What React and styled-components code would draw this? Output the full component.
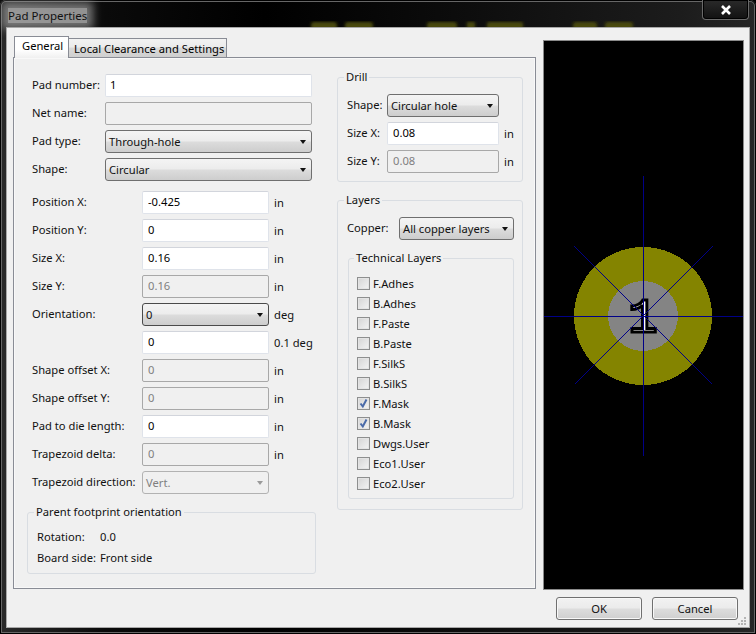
import React from "react";
import styled, { createGlobalStyle, css } from "styled-components";

const padRows = [
  { label: "Pad number:", value: "1" },
  { label: "Net name:", value: "", disabled: true },
  { label: "Pad type:", select: "Through-hole" },
  { label: "Shape:", select: "Circular" },
];

const geometryRows = [
  { label: "Position X:", value: "-0.425", unit: "in" },
  { label: "Position Y:", value: "0", unit: "in" },
  { label: "Size X:", value: "0.16", unit: "in" },
  { label: "Size Y:", value: "0.16", unit: "in", disabled: true },
  { label: "Orientation:", select: "0", unit: "deg", focused: true },
  { label: "", value: "0", unit: "0.1 deg" },
  { label: "Shape offset X:", value: "0", unit: "in", disabled: true },
  { label: "Shape offset Y:", value: "0", unit: "in", disabled: true },
  { label: "Pad to die length:", value: "0", unit: "in" },
  { label: "Trapezoid delta:", value: "0", unit: "in", disabled: true },
  { label: "Trapezoid direction:", select: "Vert.", disabled: true },
];

const layers = [
  { name: "F.Adhes" },
  { name: "B.Adhes" },
  { name: "F.Paste" },
  { name: "B.Paste" },
  { name: "F.SilkS" },
  { name: "B.SilkS" },
  { name: "F.Mask", checked: true },
  { name: "B.Mask", checked: true },
  { name: "Dwgs.User" },
  { name: "Eco1.User" },
  { name: "Eco2.User" },
];

function Select({ value, disabled, focused }) {
  return (
    <Combo $disabled={disabled} $focused={focused}>
      <span>{value}</span>
      <Arrow $disabled={disabled} />
    </Combo>
  );
}

function Control({ row }) {
  if (row.select) {
    return <Select value={row.select} disabled={row.disabled} focused={row.focused} />;
  }
  return <TextInput readOnly value={row.value} disabled={row.disabled} />;
}

// the window behind the dialog shows through the glass title bar
function TitleGlass() {
  return (
    <GlassArt width="742" height="28" viewBox="0 0 742 28">
      <defs>
        <filter id="glass-blur">
          <feGaussianBlur stdDeviation="1.6" />
        </filter>
      </defs>
      <g fill="#4a480a" filter="url(#glass-blur)">
        <rect x="304" y="22" width="26" height="8" rx="3" />
        <rect x="338" y="22" width="28" height="8" rx="3" />
        <rect x="420" y="22" width="30" height="8" rx="3" />
        <rect x="460" y="22" width="8" height="8" />
        <rect x="480" y="22" width="36" height="8" rx="2" />
        <rect x="566" y="22" width="24" height="8" rx="3" />
        <rect x="598" y="22" width="28" height="8" rx="3" />
      </g>
    </GlassArt>
  );
}

function PadPreview() {
  return (
    <svg width="199" height="548" viewBox="0 0 199 548">
      <g shapeRendering="crispEdges">
        <circle cx="99" cy="275" r="69" fill="#848400" />
        <circle cx="99" cy="275" r="35" fill="#848484" />
      </g>
      <text
        x="99"
        y="291"
        textAnchor="middle"
        fontFamily="'Liberation Mono', monospace"
        fontSize="49"
        fill="#fff"
        stroke="#000"
        strokeWidth="3"
      >
        1
      </text>
      <g stroke="#000088" strokeWidth="1" shapeRendering="crispEdges">
        <line x1="99" y1="135" x2="99" y2="415" />
        <line x1="0" y1="275" x2="199" y2="275" />
        <line x1="30" y1="205" x2="168" y2="343" />
        <line x1="169" y1="205" x2="31" y2="343" />
      </g>
    </svg>
  );
}

export default function App() {
  return (
    <>
      <GlobalStyle />
      <Window>
        <TitleBar>
          <TitleGlass />
          <Title>Pad Properties</Title>
          <CloseButton>
            <svg width="10" height="10" viewBox="0 0 10 10">
              <path d="M1 1 L9 9 M9 1 L1 9" stroke="#fff" strokeWidth="2.6" />
            </svg>
          </CloseButton>
        </TitleBar>
        <Client>
          <Main>
            <Notebook>
              <TabStrip>
                <Tab $active>General</Tab>
                <Tab>Local Clearance and Settings</Tab>
              </TabStrip>
              <Panel>
                <LeftColumn>
                  <PadForm>
                    {padRows.map((row) => (
                      <React.Fragment key={row.label}>
                        <Label>{row.label}</Label>
                        <Control row={row} />
                      </React.Fragment>
                    ))}
                  </PadForm>
                  <GeometryForm>
                    {geometryRows.map((row, index) => (
                      <React.Fragment key={index}>
                        <Label>{row.label}</Label>
                        <Control row={row} />
                        <Unit>{row.unit}</Unit>
                      </React.Fragment>
                    ))}
                  </GeometryForm>
                  <ParentBox>
                    <Legend>Parent footprint orientation</Legend>
                    <ParentGrid>
                      <Label>Rotation:</Label>
                      <Label>0.0</Label>
                      <Label>Board side:</Label>
                      <Label>Front side</Label>
                    </ParentGrid>
                  </ParentBox>
                </LeftColumn>
                <RightColumn>
                  <DrillBox>
                    <Legend>Drill</Legend>
                    <DrillForm>
                      <Label>Shape:</Label>
                      <Select value="Circular hole" />
                      <Unit />
                      <Label>Size X:</Label>
                      <TextInput readOnly value="0.08" />
                      <Unit>in</Unit>
                      <Label>Size Y:</Label>
                      <TextInput readOnly disabled value="0.08" />
                      <Unit>in</Unit>
                    </DrillForm>
                  </DrillBox>
                  <LayersBox>
                    <Legend>Layers</Legend>
                    <CopperRow>
                      <Label>Copper:</Label>
                      <Select value="All copper layers" />
                    </CopperRow>
                    <TechnicalBox>
                      <Legend>Technical Layers</Legend>
                      {layers.map((layer) => (
                        <CheckRow key={layer.name}>
                          <CheckBox>
                            {layer.checked && (
                              <svg width="11" height="11" viewBox="0 0 11 11">
                                <path d="M2.5 5.5 L4.8 8.5 L8.5 1.5" fill="none" stroke="#4a6aa8" strokeWidth="2" />
                              </svg>
                            )}
                          </CheckBox>
                          {layer.name}
                        </CheckRow>
                      ))}
                    </TechnicalBox>
                  </LayersBox>
                </RightColumn>
              </Panel>
            </Notebook>
            <Preview>
              <PadPreview />
            </Preview>
          </Main>
          <Footer>
            <PushButton>OK</PushButton>
            <PushButton>Cancel</PushButton>
          </Footer>
          <SizeGrip>
            <svg width="9" height="9" viewBox="0 0 9 9" fill="#b5b5b5">
              <rect x="6" y="0" width="2" height="2" />
              <rect x="3" y="3" width="2" height="2" />
              <rect x="6" y="3" width="2" height="2" />
              <rect x="0" y="6" width="2" height="2" />
              <rect x="3" y="6" width="2" height="2" />
              <rect x="6" y="6" width="2" height="2" />
            </svg>
          </SizeGrip>
        </Client>
      </Window>
    </>
  );
}

const GlobalStyle = createGlobalStyle`
  * {
    box-sizing: border-box;
  }
  html,
  body {
    margin: 0;
    background: #000;
  }
  body {
    font-family: "Noto Sans", "Open Sans", sans-serif;
    font-size: 11.2px;
    color: #000;
  }
`;

const Window = styled.div`
  display: flex;
  flex-direction: column;
  width: 756px;
  height: 634px;
  padding: 0 7px 7px;
  background: linear-gradient(90deg, #2a2a2a, #0a0a0a 14%, #000 35%, #0c0c0c 60%, #1c1c1c 90%, #262626);
  border-radius: 6px 6px 0 0;
  box-shadow: inset 0 0 0 1px #000, inset 0 0 0 2px #666;
  position: relative;
`;

const TitleBar = styled.div`
  display: flex;
  align-items: center;
  height: 28px;
  flex: none;
  position: relative;
`;

const GlassArt = styled.svg`
  position: absolute;
  left: 0;
  top: 0;
`;

const Title = styled.div`
  position: relative;
  margin: 3px 0 0 1px;
  font-size: 11.5px;
  line-height: 15px;
  color: #111;
  background: rgba(190, 190, 190, 0.75);
  box-shadow: 0 0 9px 6px rgba(180, 180, 180, 0.6);
`;

const CloseButton = styled.div`
  position: absolute;
  top: 0;
  right: 0;
  display: flex;
  align-items: center;
  justify-content: center;
  width: 47px;
  height: 20px;
  border: 1px solid #6a6a6a;
  border-top: none;
  border-radius: 0 0 4px 4px;
  box-shadow: inset 0 0 0 1px #000;
  background: linear-gradient(#2a2a2a, #111);
`;

const Client = styled.div`
  position: relative;
  flex: 1;
  min-height: 0;
  padding: 8px 5px 0 6px;
  background: #f0f0f0;
  box-shadow: 0 0 0 1px #a8a8a8;
`;

const Main = styled.div`
  display: flex;
  gap: 7px;
  height: 554px;
`;

const Notebook = styled.div`
  display: flex;
  flex-direction: column;
  width: 523px;
  height: 553px;
`;

const TabStrip = styled.div`
  display: flex;
  align-items: flex-end;
  height: 21px;
  padding-left: 1px;
  position: relative;
  z-index: 1;
`;

const Tab = styled.div`
  display: flex;
  align-items: center;
  border: 1px solid #898c95;
  white-space: nowrap;
  ${(p) =>
    p.$active
      ? css`
          width: 55px;
          height: 22px;
          margin-bottom: -1px;
          padding: 0 0 4px 7px;
          border-bottom: none;
          background: linear-gradient(#fff, #fff 60%, #f0f0f0);
        `
      : css`
          width: 159px;
          height: 19px;
          margin-left: -1px;
          padding-left: 5px;
          border-bottom: none;
          background: linear-gradient(#f2f2f2, #ebebeb 45%, #d9d9d9 50%, #cfcfcf);
        `}
`;

const Panel = styled.div`
  display: flex;
  gap: 21px;
  flex: 1;
  min-height: 0;
  padding-left: 13px;
  border: 1px solid #898c95;
  box-shadow: inset 0 0 0 1px #f8f8f8;
  background: #f0f0f0;
`;

const LeftColumn = styled.div`
  display: flex;
  flex-direction: column;
  width: 289px;
  padding-top: 16px;
`;

const RightColumn = styled.div`
  display: flex;
  flex-direction: column;
  gap: 10px;
  width: 186px;
  padding-top: 11px;
`;

const PadForm = styled.div`
  display: grid;
  grid-template-columns: 73px 207px;
  grid-auto-rows: 23px;
  row-gap: 5px;
  padding-left: 5px;

  input {
    padding-left: 4px;
  }
`;

const GeometryForm = styled.div`
  display: grid;
  grid-template-columns: 110px 127px auto;
  grid-auto-rows: 23px;
  row-gap: 5px;
  margin-top: 10px;
  padding-left: 5px;
`;

const Label = styled.div`
  display: flex;
  align-items: center;
  padding-bottom: 2px;
  white-space: nowrap;
  color: #111;
`;

const Unit = styled(Label)`
  padding: 0 0 0 5px;
`;

const TextInput = styled.input`
  width: 100%;
  height: 23px;
  padding: 0 5px 2px;
  font: inherit;
  color: #000;
  outline: none;
  border-radius: 2px;
  border: 1px solid #dfe3ea;
  border-top-color: #d2d5dc;
  background: #fff;

  &:disabled {
    color: #7f7f7f;
    background: #f0f0f0;
    border: 1px solid #a8a8a8;
  }
`;

const Combo = styled.div`
  display: flex;
  align-items: center;
  justify-content: space-between;
  height: 23px;
  padding: 0 5px 0 3px;
  border-radius: 3px;
  white-space: nowrap;
  ${(p) =>
    p.$disabled
      ? css`
          color: #7f7f7f;
          background: #f0f0f0;
          border: 1px solid #b2b2b2;
        `
      : css`
          color: #111;
          background: linear-gradient(#f4f4f4, #ececec 48%, #dcdcdc 52%, #cdcdcd);
          border: 1px solid ${p.$focused ? "#4a4a4a" : "#6f6f6f"};
        `}
`;

const Arrow = styled.i`
  width: 0;
  height: 0;
  border-left: 3.5px solid transparent;
  border-right: 3.5px solid transparent;
  border-top: 4px solid ${(p) => (p.$disabled ? "#9a9a9a" : "#111")};
`;

const Group = styled.fieldset`
  margin: 0;
  min-width: 0;
  border: 1px solid #d9dde2;
  border-radius: 3px;
`;

const Legend = styled.legend`
  margin-left: -3px;
  padding: 0 2px;
  font-size: 11.2px;
  line-height: 16px;
  color: #111;
`;

const ParentBox = styled(Group)`
  width: 289px;
  margin-top: 10px;
  padding: 7px 9px 4px;
`;

const ParentGrid = styled.div`
  display: grid;
  grid-template-columns: 63px 1fr;
  grid-auto-rows: 21px;
`;

const DrillBox = styled(Group)`
  width: 186px;
  padding: 9px 9px 8px;
`;

const DrillForm = styled.div`
  display: grid;
  grid-template-columns: 40px 112px auto;
  grid-auto-rows: 23px;
  row-gap: 5px;
`;

const LayersBox = styled(Group)`
  width: 186px;
  padding: 9px 9px 10px;
`;

const CopperRow = styled.div`
  display: grid;
  grid-template-columns: 52px 115px;
  grid-auto-rows: 23px;
`;

const TechnicalBox = styled(Group)`
  width: 166px;
  margin: 10px 0 0 1px;
  padding: 7px 8px 5px;
`;

const CheckRow = styled.div`
  display: flex;
  align-items: center;
  gap: 3px;
  height: 20px;
  color: #111;
`;

const CheckBox = styled.span`
  display: flex;
  align-items: center;
  justify-content: center;
  width: 13px;
  height: 13px;
  border: 1px solid #8e8f8f;
  box-shadow: inset 0 0 0 1px #e4e4e4;
  background: linear-gradient(135deg, #d4d4d4, #f4f4f4);
`;

const Preview = styled.div`
  display: flex;
  width: 201px;
  height: 550px;
  margin-top: 4px;
  border: 1px solid #8a8a8a;
  background: #000;
`;

const Footer = styled.div`
  display: flex;
  justify-content: flex-end;
  gap: 10px;
  margin-top: 7px;
  padding-right: 6px;
`;

const PushButton = styled.div`
  display: flex;
  align-items: center;
  justify-content: center;
  width: 86px;
  height: 23px;
  border: 1px solid #707070;
  border-radius: 3px;
  color: #111;
  box-shadow: inset 0 0 0 1px #f8f8f8;
  background: linear-gradient(#f2f2f2, #ebebeb 48%, #dddddd 52%, #cfcfcf);
`;

const SizeGrip = styled.div`
  position: absolute;
  right: 2px;
  bottom: 1px;
  line-height: 0;
`;
